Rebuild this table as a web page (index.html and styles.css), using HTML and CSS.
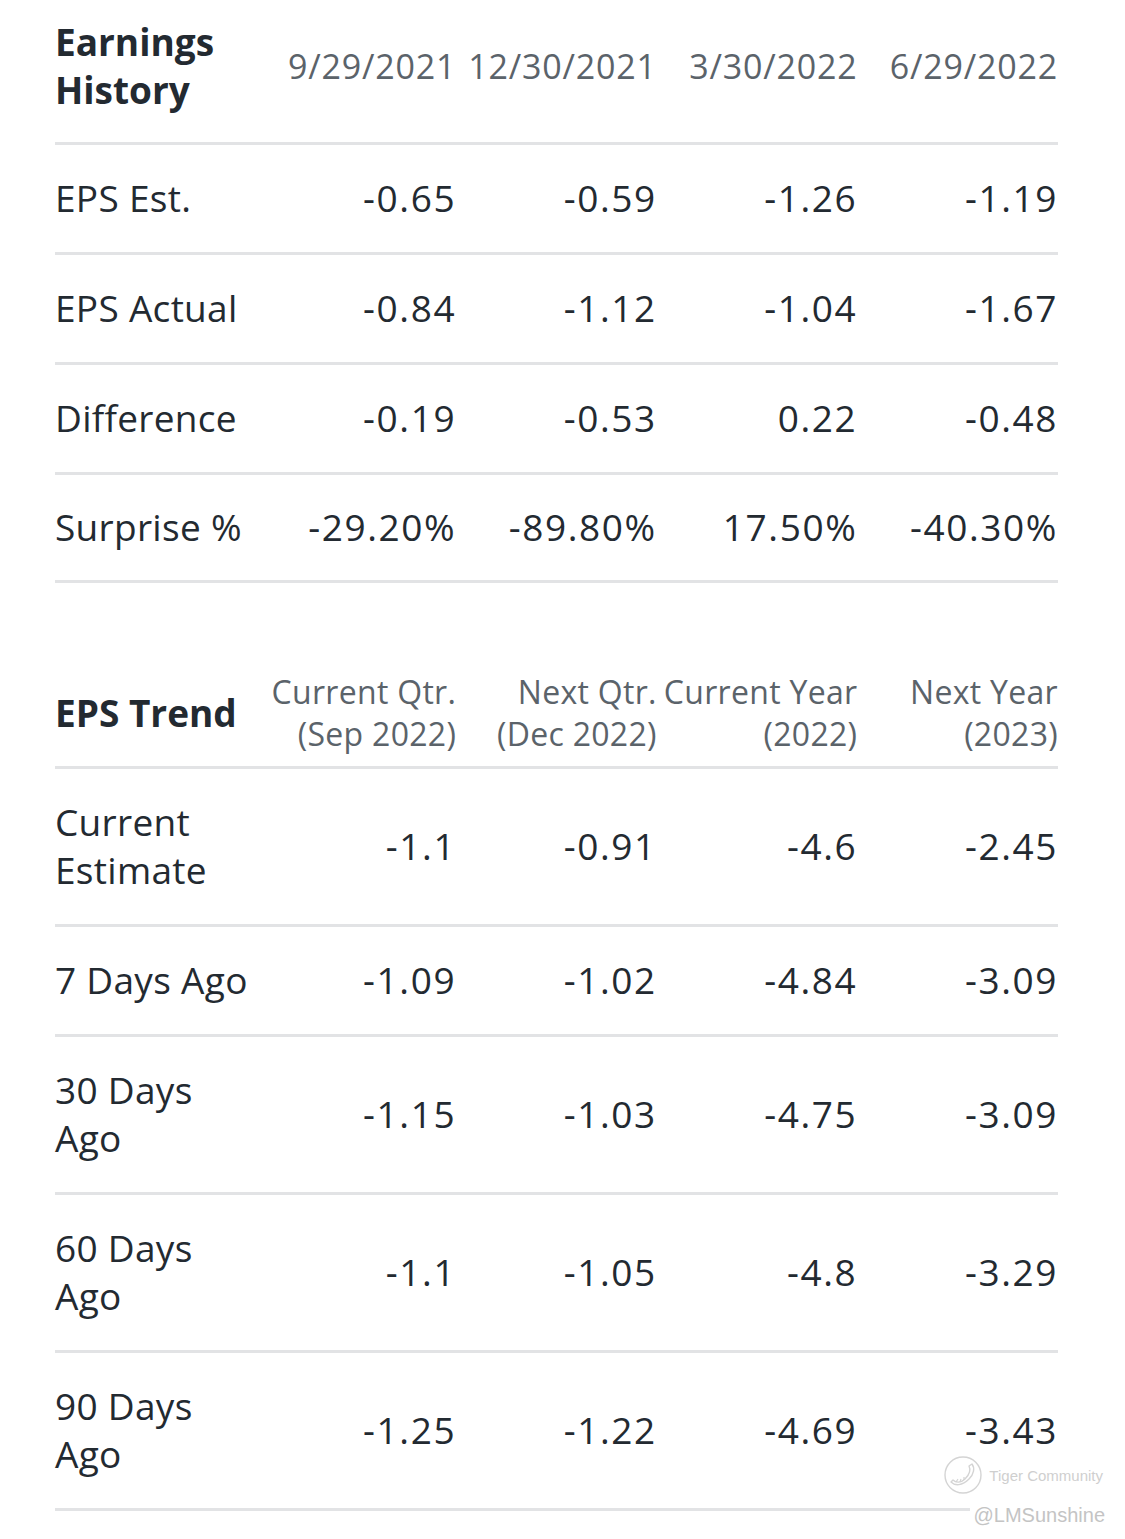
FILE: index.html
```html
<!DOCTYPE html>
<html>
<head>
<meta charset="utf-8">
<link rel="stylesheet" href="styles.css">
</head>
<body>
<div class="page">
  <table class="tbl history">
    <thead>
      <tr>
        <th class="title">Earnings<br>History</th>
        <th>9/29/2021</th>
        <th>12/30/2021</th>
        <th>3/30/2022</th>
        <th>6/29/2022</th>
      </tr>
    </thead>
    <tbody>
      <tr><td>EPS Est.</td><td>-0.65</td><td>-0.59</td><td>-1.26</td><td>-1.19</td></tr>
      <tr><td>EPS Actual</td><td>-0.84</td><td>-1.12</td><td>-1.04</td><td>-1.67</td></tr>
      <tr><td>Difference</td><td>-0.19</td><td>-0.53</td><td>0.22</td><td>-0.48</td></tr>
      <tr class="last1"><td>Surprise %</td><td>-29.20%</td><td>-89.80%</td><td>17.50%</td><td>-40.30%</td></tr>
    </tbody>
  </table>

  <table class="tbl trend">
    <thead>
      <tr>
        <th class="title">EPS Trend</th>
        <th>Current Qtr.<br>(Sep 2022)</th>
        <th>Next Qtr.<br>(Dec 2022)</th>
        <th>Current Year<br>(2022)</th>
        <th>Next Year<br>(2023)</th>
      </tr>
    </thead>
    <tbody>
      <tr><td>Current<br>Estimate</td><td>-1.1</td><td>-0.91</td><td>-4.6</td><td>-2.45</td></tr>
      <tr><td>7 Days Ago</td><td>-1.09</td><td>-1.02</td><td>-4.84</td><td>-3.09</td></tr>
      <tr><td>30 Days<br>Ago</td><td>-1.15</td><td>-1.03</td><td>-4.75</td><td>-3.09</td></tr>
      <tr><td>60 Days<br>Ago</td><td>-1.1</td><td>-1.05</td><td>-4.8</td><td>-3.29</td></tr>
      <tr><td>90 Days<br>Ago</td><td>-1.25</td><td>-1.22</td><td>-4.69</td><td>-3.43</td></tr>
    </tbody>
  </table>

  <div class="watermark">
    <div class="wm-top">
      <svg class="wm-logo" width="40" height="40" viewBox="0 0 40 40">
        <circle cx="20" cy="20" r="18" fill="none" stroke="#d4d4d4" stroke-width="1.4"/>
        <path d="M8 27 C 12 31, 19 31, 26 24 C 31 19, 32 13, 29 9 L 26 11 C 28 15, 26 20, 22 24 C 18 28, 13 28, 10 25 Z" fill="none" stroke="#d4d4d4" stroke-width="1.4" stroke-linejoin="round"/>
        <path d="M13 27 L 15 24 M17 27 L 18 24 M21 25 L 21 22" stroke="#d4d4d4" stroke-width="1.2"/>
      </svg>
      <span class="wm-name">Tiger Community</span>
    </div>
    <div class="wm-user">@LMSunshine</div>
  </div>
</div>
</body>
</html>
```

FILE: styles.css
```css
html, body {
  margin: 0;
  padding: 0;
  background: #ffffff;
}

.page {
  position: relative;
  width: 1125px;
  height: 1539px;
  padding: 18px 0 0 55px;
  box-sizing: border-box;
  font-family: "Open Sans", "Noto Sans", sans-serif;
  color: #232a31;
}

.tbl {
  width: 1003px;
  border-collapse: collapse;
  table-layout: fixed;
}

.tbl th,
.tbl td {
  width: 20%;
  padding: 0;
  text-align: right;
  vertical-align: middle;
  white-space: nowrap;
}

.tbl th:first-child,
.tbl td:first-child {
  text-align: left;
}

.tbl th {
  font-weight: 400;
  color: #5b636a;
  border-bottom: 3px solid #e2e3e5;
}

.tbl th.title {
  font-weight: 700;
  color: #232a31;
  font-size: 37px;
  letter-spacing: 0;
}

.tbl td {
  font-size: 37px;
  line-height: 48px;
  padding: 29px 0 30px;
  border-bottom: 3px solid #e2e3e5;
  letter-spacing: 1.6px;
}

.tbl td:first-child {
  letter-spacing: 0.3px;
}

.history .last1 td {
  padding: 28px 0 29px;
}

.history th {
  font-size: 34px;
  line-height: 48px;
  letter-spacing: 0.8px;
  padding: 0 0 28px;
}

.trend {
  margin-top: 88px;
}

.trend th {
  font-size: 32px;
  line-height: 42px;
  letter-spacing: 0.3px;
  padding: 0 0 11px;
}

.watermark {
  position: absolute;
  right: 20px;
  bottom: 12px;
  display: flex;
  flex-direction: column;
  align-items: flex-end;
  color: #c9c9c9;
}

.wm-top {
  display: flex;
  align-items: center;
  gap: 6px;
  margin-right: 2px;
  margin-bottom: 8px;
}

.wm-name {
  font-family: "Liberation Sans", sans-serif;
  font-size: 15px;
  color: #cfcfcf;
}

.wm-user {
  font-family: "Liberation Sans", sans-serif;
  font-size: 20px;
  color: #c4c4c4;
  background: #ffffff;
  padding-left: 4px;
  line-height: 24px;
}
```
